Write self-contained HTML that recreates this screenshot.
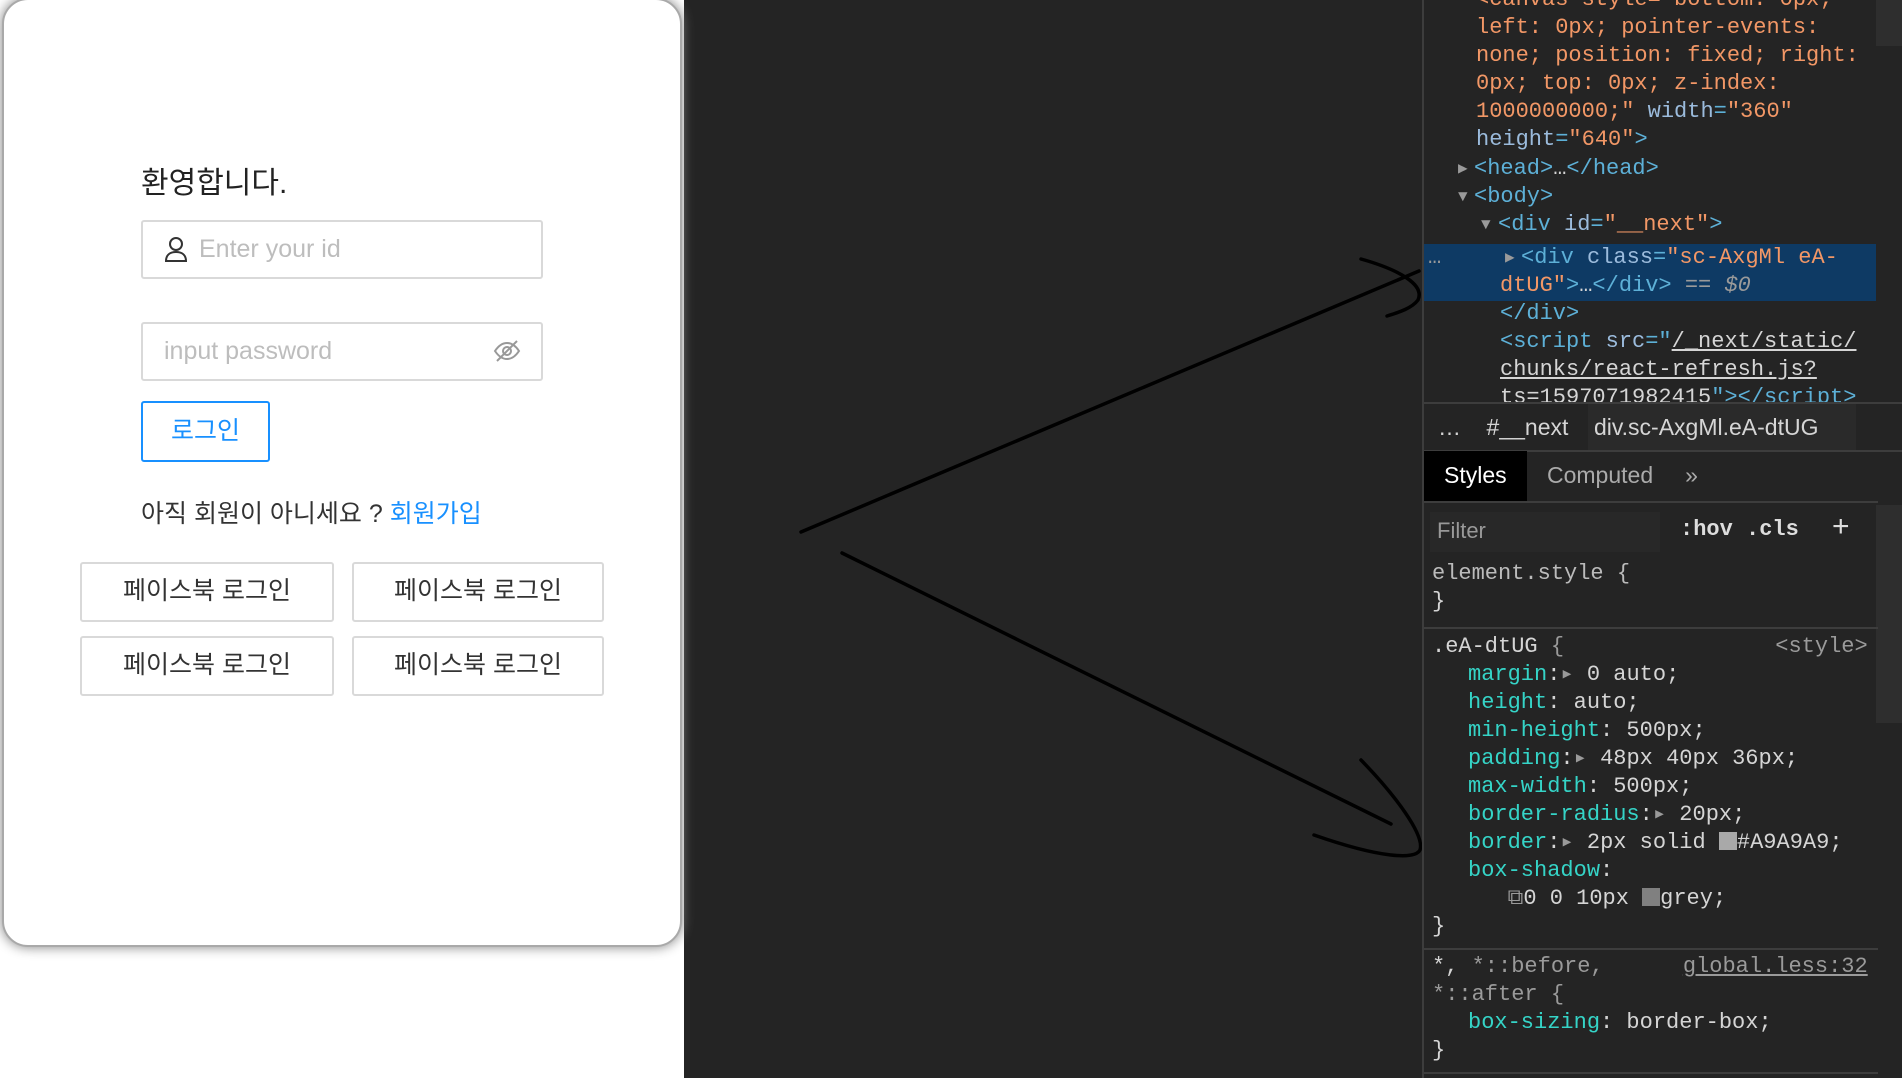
<!DOCTYPE html>
<html><head><meta charset="utf-8"><style>
*{box-sizing:border-box;margin:0;padding:0}
body{width:1902px;height:1078px;overflow:hidden;background:#242424;position:relative;font-family:"Liberation Sans","Noto Sans CJK KR",sans-serif}
.abs{position:absolute}
#left{left:0;top:0;width:684px;height:1078px;background:#fff}
#card{left:2px;top:-2px;width:680px;height:949px;border:2px solid #a9a9a9;border-radius:26px;box-shadow:0 0 12px grey;background:#fff}
.h{left:141px;top:158px;font-size:30px;color:#222}
.inp{border:2px solid #d9d9d9;border-radius:3px;background:#fff;color:#bdbdbd;font-size:25px;line-height:54px}
.btn{border:2px solid #d9d9d9;border-radius:3px;background:#fff;color:#333;font-size:25px;text-align:center;line-height:55px}
.mono{font-family:"Liberation Mono","DejaVu Sans Mono",monospace;font-size:22px;line-height:28px;white-space:pre}
.o{color:#f29766}.b{color:#5db0d7}.a{color:#9bbbdc}.g{color:#d5d5d5}.t{color:#35d4c7}.m{color:#9a9a9a}
</style></head><body>
<div id="left" class="abs"></div>
<div id="card" class="abs"></div>
<div class="abs h">환영합니다.</div>
<div class="abs inp" style="left:141px;top:220px;width:402px;height:59px;padding-left:56px">Enter your id</div>
<svg class="abs" style="left:164px;top:236px" width="24" height="26" viewBox="0 0 24 26" fill="none" stroke="#333" stroke-width="2"><circle cx="12" cy="8" r="6"/><path d="M2 25c0-6 4-9 10-9s10 3 10 9z"/></svg>
<div class="abs inp" style="left:141px;top:322px;width:402px;height:59px;padding-left:21px">input password</div>
<svg class="abs" style="left:493px;top:339px" width="28" height="24" viewBox="0 0 28 24" fill="none" stroke="#999" stroke-width="2"><path d="M2 12c4-6 8-8 12-8s8 2 12 8c-4 6-8 8-12 8S6 18 2 12z"/><circle cx="14" cy="12" r="4"/><path d="M4 22L24 2"/></svg>
<div class="abs btn" style="left:141px;top:401px;width:129px;height:61px;border-color:#1890ff;color:#1890ff;line-height:57px">로그인</div>
<div class="abs" style="left:141px;top:494px;font-size:25px;color:#333">아직 회원이 아니세요 ? <span style="color:#1890ff">회원가입</span></div>
<div class="abs btn" style="left:80px;top:562px;width:254px;height:60px">페이스북 로그인</div>
<div class="abs btn" style="left:352px;top:562px;width:252px;height:60px">페이스북 로그인</div>
<div class="abs btn" style="left:80px;top:636px;width:254px;height:60px">페이스북 로그인</div>
<div class="abs btn" style="left:352px;top:636px;width:252px;height:60px">페이스북 로그인</div>

<svg class="abs" style="left:0;top:0" width="1902" height="1078" fill="none" stroke="#000" stroke-width="3.5" stroke-linecap="round">
<path d="M801 532L1419 271"/><path d="M1361 259C1400 270 1425 285 1418 300C1412 308 1400 312 1387 316"/>
<path d="M842 553L1391 824"/><path d="M1361 760C1395 795 1425 835 1420 850C1415 860 1380 858 1314 835"/>
</svg>

<div class="abs" style="left:1422px;top:0;width:2px;height:1078px;background:#3d3d3d"></div>
<div class="abs" style="left:1876px;top:0;width:26px;height:46px;background:#2e2e2e"></div>
<div class="abs" style="left:1424px;top:244px;width:452px;height:57px;background:#0e3a64"></div>
<div class="abs mono" style="left:1476px;top:-14px"><span class="o">&lt;canvas style="bottom: 0px;
left: 0px; pointer-events:
none; position: fixed; right:
0px; top: 0px; z-index:
1000000000;"</span> <span class="a">width</span><span class="b">=</span><span class="o">"360"</span>
<span class="a">height</span><span class="b">=</span><span class="o">"640"</span><span class="b">&gt;</span></div>
<div class="abs mono" style="left:1458px;top:155px;font-size:16px"><span class="m">▶</span>
<span class="m">▼</span></div>
<div class="abs mono" style="left:1474px;top:155px"><span class="b">&lt;head&gt;</span><span class="g">…</span><span class="b">&lt;/head&gt;</span>
<span class="b">&lt;body&gt;</span></div>
<div class="abs mono" style="left:1481px;top:211px;font-size:16px"><span class="m">▼</span></div>
<div class="abs mono" style="left:1498px;top:211px"><span class="b">&lt;div </span><span class="a">id</span><span class="b">=</span><span class="o">"__next"</span><span class="b">&gt;</span></div>
<div class="abs mono m" style="left:1428px;top:244px">…</div>
<div class="abs mono" style="left:1505px;top:244px;font-size:16px"><span class="m">▶</span></div>
<div class="abs mono" style="left:1521px;top:244px"><span class="b">&lt;div </span><span class="a">class</span><span class="b">=</span><span class="o">"sc-AxgMl eA-</span></div>
<div class="abs mono" style="left:1500px;top:272px"><span class="o">dtUG"</span><span class="b">&gt;</span><span class="g">…</span><span class="b">&lt;/div&gt;</span> <span class="m">== <i>$0</i></span>
<span class="b">&lt;/div&gt;</span>
<span class="b">&lt;script </span><span class="a">src</span><span class="b">="</span><span class="g" style="text-decoration:underline">/_next/static/</span>
<span class="g" style="text-decoration:underline">chunks/react-refresh.js?</span>
<span class="g">ts=1597071982415</span><span class="b">"&gt;&lt;/script&gt;</span></div>
<div class="abs" style="left:1424px;top:402px;width:478px;height:50px;background:#242424;border-top:2px solid #3d3d3d;border-bottom:2px solid #3d3d3d"></div>
<div class="abs" style="left:1588px;top:404px;width:268px;height:46px;background:#2a2a2a"></div>
<div class="abs g" style="left:1438px;top:414px;font-size:23px;white-space:pre">…    #__next    div.sc-AxgMl.eA-dtUG</div>
<div class="abs" style="left:1424px;top:451px;width:103px;height:50px;background:#000"></div>
<div class="abs" style="left:1444px;top:462px;font-size:23px;color:#fff">Styles</div>
<div class="abs" style="left:1547px;top:462px;font-size:23px;color:#aaa;white-space:pre">Computed     »</div>
<div class="abs" style="left:1424px;top:501px;width:454px;height:2px;background:#3d3d3d"></div>
<div class="abs" style="left:1430px;top:512px;width:230px;height:40px;background:#282828"></div>
<div class="abs" style="left:1437px;top:518px;font-size:22px;color:#999">Filter</div>
<div class="abs mono" style="left:1680px;top:516px;color:#ddd;font-weight:bold">:hov .cls</div>
<div class="abs" style="left:1832px;top:510px;font-size:30px;color:#ddd">+</div>
<div class="abs" style="left:1876px;top:505px;width:26px;height:218px;background:#2e2e2e"></div>
<div class="abs mono g" style="left:1432px;top:560px"><span style="color:#bbb">element.style {</span>
}</div>
<div class="abs" style="left:1424px;top:627px;width:454px;height:2px;background:#3d3d3d"></div>
<div class="abs mono g" style="left:1432px;top:633px">.eA-dtUG <span class="m">{</span>                <span class="m">&lt;style&gt;</span></div>
<div class="abs mono g" style="left:1468px;top:661px"><span class="t">margin</span>:<span class="m">▸</span> 0 auto;
<span class="t">height</span>: auto;
<span class="t">min-height</span>: 500px;
<span class="t">padding</span>:<span class="m">▸</span> 48px 40px 36px;
<span class="t">max-width</span>: 500px;
<span class="t">border-radius</span>:<span class="m">▸</span> 20px;
<span class="t">border</span>:<span class="m">▸</span> 2px solid <span style="display:inline-block;width:18px;height:18px;background:#a9a9a9;vertical-align:-2px"></span>#A9A9A9;
<span class="t">box-shadow</span>:
   <span class="m">⧉</span>0 0 10px <span style="display:inline-block;width:18px;height:18px;background:#808080;vertical-align:-2px"></span>grey;</div>
<div class="abs mono g" style="left:1432px;top:913px">}</div>
<div class="abs" style="left:1424px;top:948px;width:454px;height:2px;background:#3d3d3d"></div>
<div class="abs mono g" style="left:1432px;top:953px">*, <span class="m">*::before,</span>      <span class="m" style="text-decoration:underline">global.less:32</span>
<span class="m">*::after {</span></div>
<div class="abs mono g" style="left:1468px;top:1009px"><span class="t">box-sizing</span>: border-box;</div>
<div class="abs mono g" style="left:1432px;top:1037px">}</div>
<div class="abs" style="left:1424px;top:1072px;width:454px;height:2px;background:#3d3d3d"></div>
</body></html>
